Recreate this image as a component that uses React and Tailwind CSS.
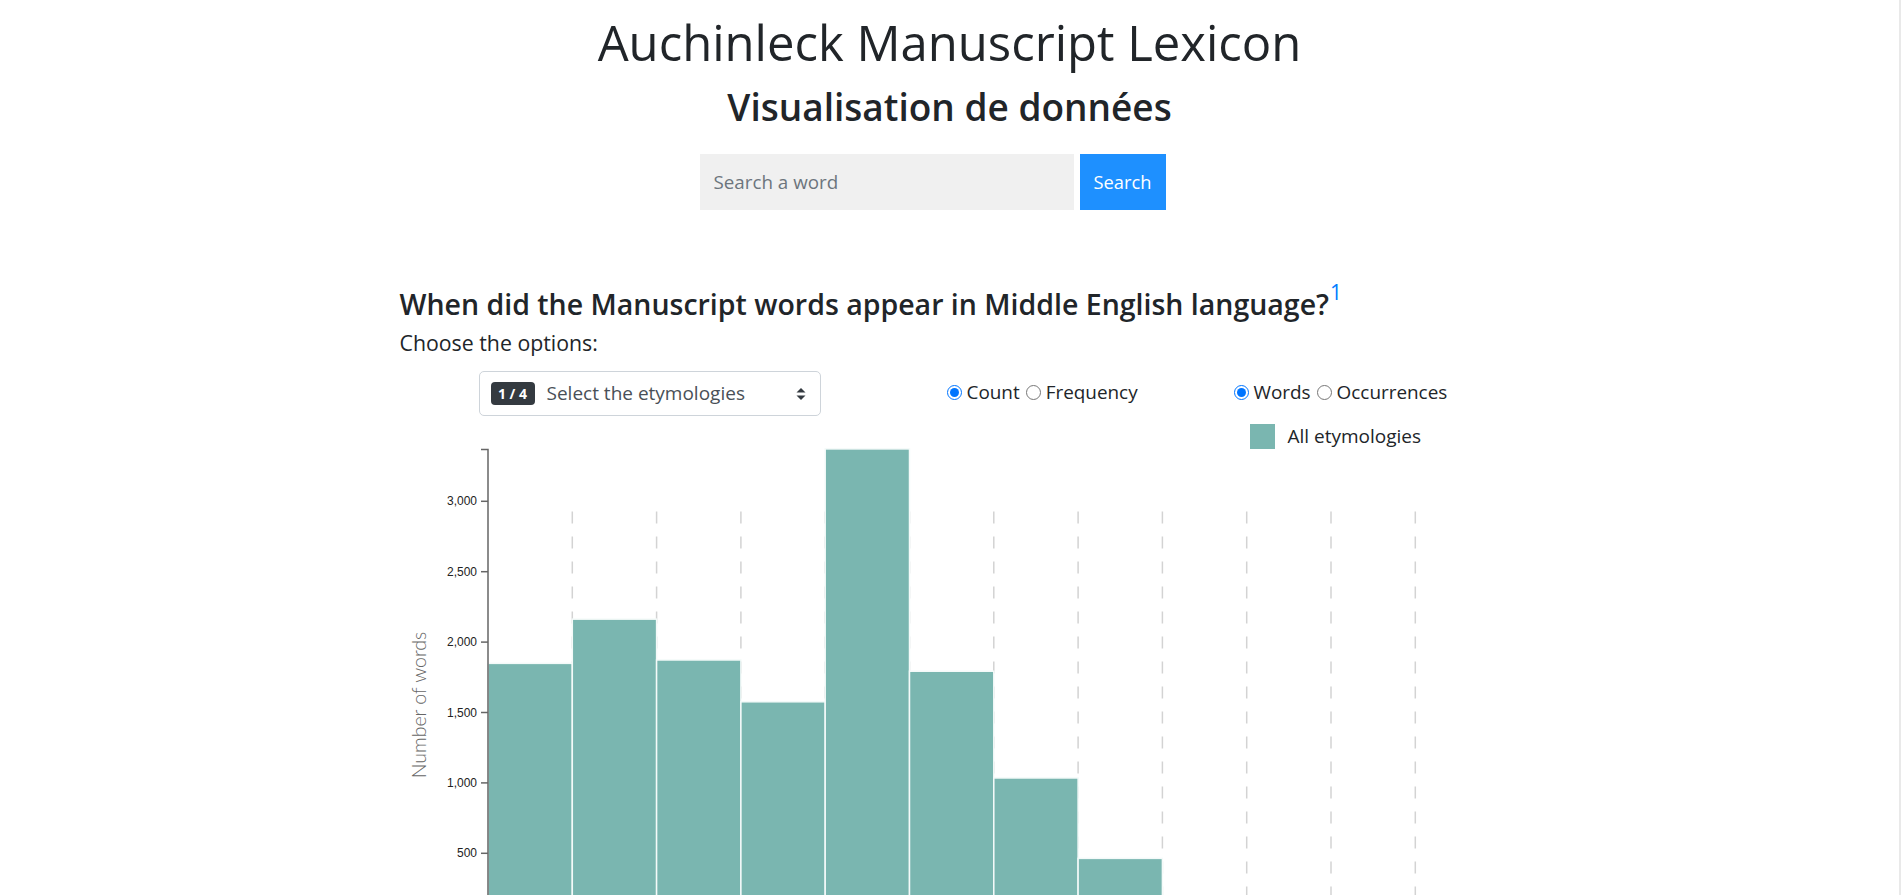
import { useState } from "react";

// counts per period (bins of the histogram), last bins are empty
const BARS = [1849, 2163, 1873, 1576, 3372, 1793, 1035, 464, 0, 0, 0, 0];
const TICKS = [500, 1000, 1500, 2000, 2500, 3000];
const STEP = 84.3;
const AXIS_X = 88;
const ZERO_Y = 474.7;
const PX_PER_UNIT = 0.1408;
const TEAL = "#7ab6b0";

const yOf = (v) => ZERO_Y - v * PX_PER_UNIT;

function SelectArrows() {
  return (
    <svg width="10" height="12" viewBox="0 0 10 12" className="block">
      <path d="M5 0 L9.5 4.5 H0.5 Z" fill="#343a40" />
      <path d="M5 12 L9.5 7.5 H0.5 Z" fill="#343a40" />
    </svg>
  );
}

function Radio({ name, label, checked, onChange, first }) {
  return (
    <label className={`flex items-center ${first ? "" : "ml-[6px]"}`}>
      <input
        type="radio"
        name={name}
        checked={checked}
        onChange={onChange}
        className="m-0 mr-[5px] h-[15px] w-[15px] accent-[#0075ff]"
      />
      <span>{label}</span>
    </label>
  );
}

function Chart() {
  return (
    <svg width="1100" height="480" className="block overflow-visible">
      {/* dashed vertical grid */}
      {BARS.slice(1).map((_, i) => {
        const x = AXIS_X + (i + 1) * STEP;
        return (
          <line
            key={i}
            x1={x}
            x2={x}
            y1={62.5}
            y2={ZERO_Y}
            stroke="#d3d3d3"
            strokeWidth="1.5"
            strokeDasharray="12 13"
          />
        );
      })}

      {BARS.map((v, i) =>
        v > 0 ? (
          <rect
            key={i}
            x={AXIS_X + i * STEP}
            y={yOf(v)}
            width={STEP}
            height={ZERO_Y - yOf(v)}
            fill={TEAL}
            stroke="#f4faf9"
            strokeWidth="1.5"
          />
        ) : null
      )}

      {/* y axis */}
      <g fontFamily="'Liberation Sans', Arial, sans-serif" fontSize="12" fill="#222">
        <path
          d={`M${AXIS_X - 7},0.5 H${AXIS_X} V${ZERO_Y}`}
          fill="none"
          stroke="#666"
          strokeWidth="1.5"
        />
        {TICKS.map((t) => (
          <g key={t}>
            <line x1={AXIS_X - 7} x2={AXIS_X} y1={yOf(t)} y2={yOf(t)} stroke="#666" strokeWidth="1.5" />
            <text x={AXIS_X - 11} y={yOf(t)} textAnchor="end" dominantBaseline="central">
              {t.toLocaleString("en-US")}
            </text>
          </g>
        ))}
      </g>

      <line x1={AXIS_X} x2={AXIS_X + 12 * STEP} y1={ZERO_Y} y2={ZERO_Y} stroke="#666" />

      <text
        x="18"
        y="256"
        transform="rotate(-90 18 256)"
        textAnchor="middle"
        dominantBaseline="central"
        fontFamily="Lato, 'Open Sans', sans-serif"
        fontWeight="300"
        fontSize="19.5"
        fill="#666"
      >
        Number of words
      </text>
    </svg>
  );
}

export default function App() {
  const [measure, setMeasure] = useState("count");
  const [unit, setUnit] = useState("words");
  const [query, setQuery] = useState("");

  return (
    <div className="flex min-h-screen bg-white font-['Open_Sans','Noto_Sans',sans-serif] text-[#212529]">
      <main className="flex-1">
        <h1 className="pt-[13px] text-center text-[49px] font-normal leading-[59px]">
          Auchinleck Manuscript Lexicon
        </h1>
        <h2 className="mt-[13px] text-center text-[37px] font-semibold leading-[44px]">
          Visualisation de données
        </h2>

        <form className="mt-[25px] flex justify-center" onSubmit={(e) => e.preventDefault()}>
          <div className="mr-[34px] flex gap-[6px]">
            <input
              type="text"
              value={query}
              onChange={(e) => setQuery(e.target.value)}
              placeholder="Search a word"
              className="h-[56px] w-[374px] bg-[#f0f0f0] pl-[14px] text-[18.8px] text-[#495057] outline-none placeholder:text-[#6c757d]"
            />
            <button type="submit" className="h-[56px] w-[86px] bg-[#1e90ff] text-[18.3px] text-white">
              Search
            </button>
          </div>
        </form>

        <section className="mx-auto mt-[77px] w-[1100px]">
          <h4 className="text-[28.5px] font-semibold leading-[34px]">
            When did the Manuscript words appear in Middle English language?
            <sup className="-top-[0.72em] ml-[1px] text-[21px] font-normal text-[#007bff]">1</sup>
          </h4>
          <p className="mt-[9px] text-[21.3px] leading-[26px]">Choose the options:</p>

          <div className="mt-[15px] flex items-center pl-[79px] text-[18.9px]">
            <button
              type="button"
              className="flex h-[45px] w-[342px] items-center rounded-[5px] border border-[#ced4da] bg-white pl-[11px] pr-[14px] text-left"
            >
              <span className="flex h-[23px] w-[44px] items-center justify-center rounded-[4px] bg-[#343a40] text-[14px] font-bold leading-none text-white">
                1 / 4
              </span>
              <span className="ml-[12px] flex-1 text-[19px] text-[#495057]">Select the etymologies</span>
              <SelectArrows />
            </button>

            <div className="-mt-[2px] ml-[126px] flex w-[287px] items-center">
              <Radio name="measure" label="Count" first checked={measure === "count"} onChange={() => setMeasure("count")} />
              <Radio name="measure" label="Frequency" checked={measure === "frequency"} onChange={() => setMeasure("frequency")} />
            </div>
            <div className="-mt-[2px] flex items-center">
              <Radio name="unit" label="Words" first checked={unit === "words"} onChange={() => setUnit("words")} />
              <Radio name="unit" label="Occurrences" checked={unit === "occurrences"} onChange={() => setUnit("occurrences")} />
            </div>
          </div>

          <div className="mt-[7px] flex h-[26px] items-center pl-[850px]">
            <span className="h-[25px] w-[25px]" style={{ backgroundColor: TEAL }} />
            <span className="ml-[13px] text-[19px] leading-none">All etymologies</span>
          </div>

          <Chart />
        </section>
      </main>
      <div className="w-[2px] bg-[#e9e9e9]" />
    </div>
  );
}
